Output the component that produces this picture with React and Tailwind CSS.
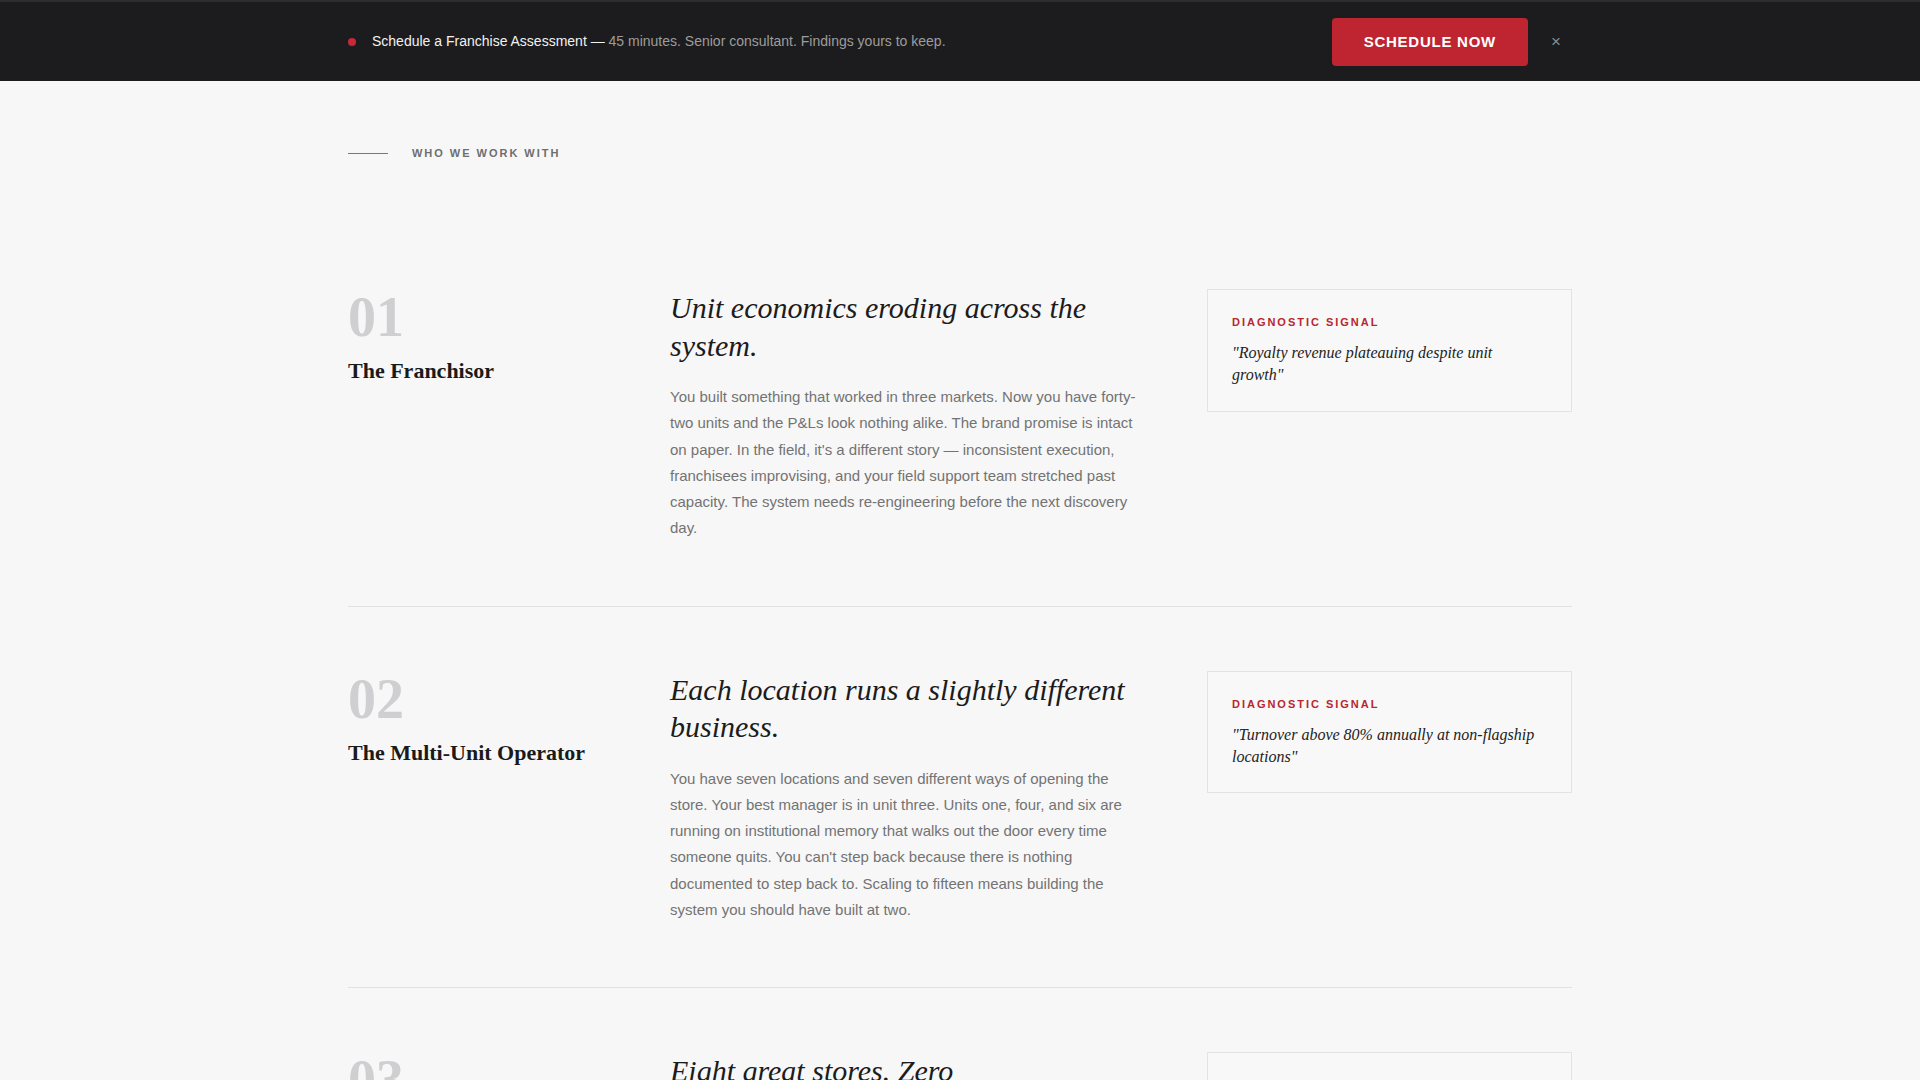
const segments = [
  {
    num: '01',
    title: 'The Franchisor',
    heading: 'Unit economics eroding across the system.',
    body:
      "You built something that worked in three markets. Now you have forty-two units and the P&Ls look nothing alike. The brand promise is intact on paper. In the field, it's a different story — inconsistent execution, franchisees improvising, and your field support team stretched past capacity. The system needs re-engineering before the next discovery day.",
    signal: '"Royalty revenue plateauing despite unit growth"',
  },
  {
    num: '02',
    title: 'The Multi-Unit Operator',
    heading: 'Each location runs a slightly different business.',
    body:
      "You have seven locations and seven different ways of opening the store. Your best manager is in unit three. Units one, four, and six are running on institutional memory that walks out the door every time someone quits. You can't step back because there is nothing documented to step back to. Scaling to fifteen means building the system you should have built at two.",
    signal: '"Turnover above 80% annually at non-flagship locations"',
  },
  {
    num: '03',
    title: 'The Emerging Brand',
    heading: 'Eight great stores. Zero standardization.',
    body:
      "Customers drive across town for what you make, and people keep asking how they can open one. But the recipe lives in your head, the training is you standing next to someone, and the operations manual is a shared folder nobody opens. Before you sell a single franchise, the business has to run without you in the building.",
    signal: '"Every new location still depends on the founder being there"',
  },
];

function TopBar() {
  return (
    <div className="bg-[#1c1c1e] border-t-2 border-[#2d2d30]">
      <div className="mx-auto max-w-[1224px] h-[79px] flex items-center justify-between">
        <div className="flex items-center gap-4 text-[14px]">
          <span className="w-2 h-2 rounded-full bg-[#c8283a]"></span>
          <p className="-mt-px">
            <span className="text-[#f2f2f2]">Schedule a Franchise Assessment —</span>{' '}
            <span className="text-[#9c9c9c]">45 minutes. Senior consultant. Findings yours to keep.</span>
          </p>
        </div>
        <div className="flex items-center gap-3">
          <button className="bg-[#be2530] text-white font-bold text-[15px] leading-5 tracking-[0.05em] px-8 py-[14px] rounded-sm">
            SCHEDULE NOW
          </button>
          <button className="w-8 text-center text-[#8a8a8a] text-[17px] leading-none">×</button>
        </div>
      </div>
    </div>
  );
}

function Segment({ item }) {
  return (
    <div className="grid grid-cols-[258px_1fr_365px] gap-x-16 py-16 border-b border-[#e2e2e2]">
      <div>
        <div className="text-[56px] leading-none font-bold text-[#cfcfd1]" style={{ fontFamily: '"Liberation Serif", serif' }}>
          {item.num}
        </div>
        <h3 className="mt-3 text-[22px] leading-[1.3] font-bold text-[#1a1a1a]" style={{ fontFamily: '"Liberation Serif", serif' }}>
          {item.title}
        </h3>
      </div>
      <div>
        <h2 className="text-[30px] leading-[1.25] italic text-[#1c1c1c]" style={{ fontFamily: '"Liberation Serif", serif' }}>
          {item.heading}
        </h2>
        <p className="mt-5 text-[15px] leading-[1.75] text-[#737373]">{item.body}</p>
      </div>
      <div>
        <div className="border border-[#e3e3e3] bg-[#f8f8f8] p-6">
          <div className="text-[11px] leading-4 font-bold tracking-[0.18em] text-[#b8262f]">DIAGNOSTIC SIGNAL</div>
          <p className="mt-3 text-[16px] leading-[1.4] italic text-[#222]" style={{ fontFamily: '"Liberation Serif", serif' }}>
            {item.signal}
          </p>
        </div>
      </div>
    </div>
  );
}

export default function App() {
  return (
    <div className="min-h-screen bg-[#f7f7f7]" style={{ fontFamily: '"Liberation Sans", Arial, sans-serif' }}>
      <TopBar />
      <div className="mx-auto max-w-[1224px] pt-16 pb-24">
        <div className="flex items-center gap-6 mb-16">
          <span className="w-10 h-px bg-[#777]"></span>
          <span className="text-[11px] leading-4 font-bold tracking-[0.18em] text-[#6e6e6e]">WHO WE WORK WITH</span>
        </div>
        {segments.map((item) => (
          <Segment key={item.num} item={item} />
        ))}
      </div>
    </div>
  );
}
